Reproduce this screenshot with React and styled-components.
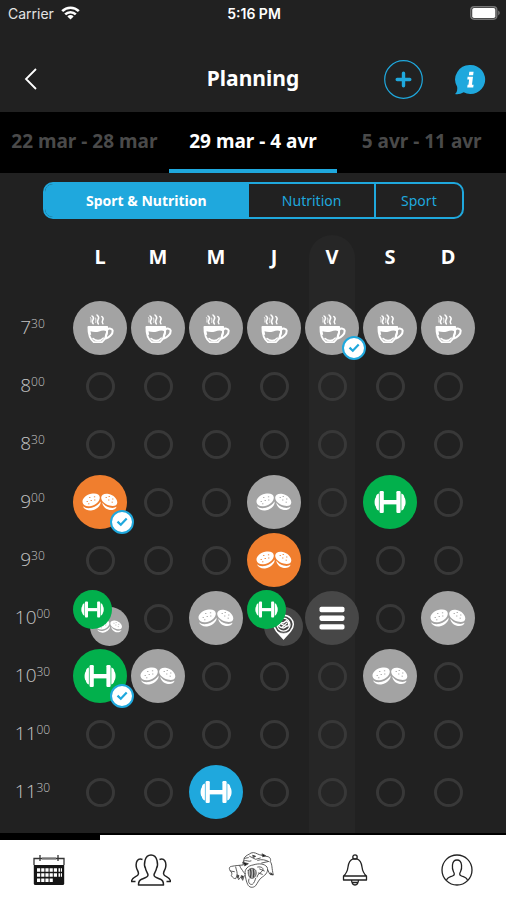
import React, { useState } from "react";
import styled, { createGlobalStyle, css } from "styled-components";

const color = {
  page: "#212121",
  column: "#262626",
  ring: "#383838",
  blue: "#1fa8dd",
  green: "#02b04c",
  orange: "#f07e2e",
  grey: "#a3a3a3",
  dark: "#474747",
};

const GlobalStyle = createGlobalStyle`
  * { box-sizing: border-box; }
  body { margin: 0; background: ${color.page}; color: #fff; font-family: "Noto Sans", "Open Sans", sans-serif; }
  button { margin: 0; padding: 0; border: 0; background: none; color: inherit; font: inherit; cursor: pointer; }
  svg { display: block; }
`;

const Page = styled.div`
  display: flex;
  flex-direction: column;
  min-height: 100vh;
  overflow: hidden;
`;

const StatusBar = styled.div`
  display: grid;
  grid-template-columns: 1fr auto 1fr;
  align-items: center;
  height: 26px;
  padding: 0 6px 0 8px;
  font-family: Inter, sans-serif;
  font-size: 14px;
`;

const Carrier = styled.div`
  display: flex;
  align-items: center;
  gap: 7px;
  color: #e4e4e4;
`;

const Clock = styled.div`
  font-weight: 600;
`;

const BatterySlot = styled.div`
  justify-self: end;
`;

const Header = styled.header`
  display: grid;
  grid-template-columns: 1fr auto 1fr;
  align-items: center;
  height: 86px;
  padding: 20px 20px 0 20px;
`;

const Title = styled.h1`
  margin: 0;
  padding-bottom: 3px;
  font-size: 21px;
  line-height: 32px;
  font-weight: 700;
`;

const BackButton = styled.button`
  justify-self: start;
`;

const Actions = styled.div`
  display: flex;
  align-items: center;
  justify-content: flex-end;
  gap: 32px;
`;

const WeekTabs = styled.nav`
  display: grid;
  grid-template-columns: repeat(3, 1fr);
  height: 61px;
  background: #000;
`;

const WeekTab = styled.button`
  border-bottom: 4px solid ${(p) => (p.$active ? color.blue : "transparent")};
  color: ${(p) => (p.$active ? "#fff" : "#4a4a4a")};
  font-size: 19px;
  font-weight: 700;
  white-space: nowrap;
`;

const Segments = styled.div`
  display: grid;
  grid-template-columns: 202fr 126fr 88fr;
  height: 37px;
  margin: 9px 42px 0 43px;
  border: 2px solid ${color.blue};
  border-radius: 10px;
  overflow: hidden;
`;

const Segment = styled.button`
  font-size: 14px;
  color: ${(p) => (p.$active ? "#fff" : color.blue)};
  background: ${(p) => (p.$active ? color.blue : "transparent")};
  font-weight: ${(p) => (p.$active ? 700 : 400)};
  & + & {
    border-left: 2px solid ${color.blue};
  }
`;

const Board = styled.main`
  padding: 16px 29px 0 0;
`;

const Schedule = styled.table`
  width: 100%;
  table-layout: fixed;
  border-collapse: collapse;
`;

const TimeColumn = styled.col`
  width: 71px;
`;

const DayHead = styled.th`
  height: 64px;
  padding: 0;
  vertical-align: top;
`;

const DayName = styled.div`
  width: 46px;
  height: 64px;
  margin: 0 auto;
  padding-top: 8px;
  border-radius: 23px 23px 0 0;
  background: ${(p) => (p.$today ? color.column : "transparent")};
  font-size: 20px;
  line-height: 28px;
  font-weight: 700;
`;

const TimeCell = styled.th`
  height: 58px;
  padding: 0 6px 0 0;
  vertical-align: top;
  color: #c4c4c4;
  font-family: "Open Sans", sans-serif;
  font-weight: 300;
  font-size: 19px;
  line-height: 56px;
`;

const Minutes = styled.sup`
  font-size: 12px;
  line-height: 1;
  vertical-align: 6px;
`;

const DayCell = styled.td`
  height: 58px;
  padding: 0;
  vertical-align: top;
  ${(p) =>
    p.$today &&
    css`
      background: linear-gradient(${color.column}, ${color.column}) center / 46px 100% no-repeat;
    `}
  tr:last-child & {
    padding-bottom: 12px;
  }
`;

const Slot = styled.div`
  position: relative;
  display: grid;
  place-items: center;
  width: 58px;
  height: 58px;
  margin: 0 auto;
`;

const EmptySlot = styled.button`
  width: 29px;
  height: 29px;
  border: 3px solid ${color.ring};
  border-radius: 50%;
`;

const Activity = styled.button`
  width: 54px;
  height: 54px;
  border-radius: 50%;
  background: ${(p) => color[p.$tone]};
  color: ${(p) => color[p.$tone]};
  svg {
    width: 100%;
    height: 100%;
  }
`;

const StackedActivity = styled(Activity)`
  position: absolute;
  width: 39px;
  height: 39px;
  ${(p) => (p.$front ? "left: 2px; top: 1px;" : "right: 0; bottom: 1px;")}
`;

const DoneBadge = styled.span`
  position: absolute;
  right: -5px;
  bottom: -3px;
  z-index: 1;
  display: grid;
  place-items: center;
  width: 24px;
  height: 24px;
  border: 2px solid ${color.blue};
  border-radius: 50%;
  background: #fff;
`;

const BottomNav = styled.nav`
  display: grid;
  grid-template-columns: repeat(5, 1fr);
  height: 67px;
  margin: auto -2px 0;
  border-top: 2px solid #000;
  background: #fff;
`;

const NavItem = styled.button`
  display: grid;
  place-items: center;
  border-top: 5px solid transparent;
  border-image: ${(p) => (p.$active ? "linear-gradient(90deg, #000 97%, #fff 97%) 5" : "none")};
  color: #222;
`;

const WifiIcon = () => (
  <svg width="19" height="14" viewBox="0 0 19 14" fill="none" stroke="#fff" strokeWidth="2.6">
    <path d="M1.2 5.2a11.8 11.8 0 0 1 16.6 0" />
    <path d="M4.2 8.4a7.5 7.5 0 0 1 10.6 0" />
    <path d="M9.5 13.6 6.4 10.4a4.4 4.4 0 0 1 6.2 0z" fill="#fff" stroke="none" />
  </svg>
);

const BatteryIcon = () => (
  <svg width="30" height="14" viewBox="0 0 30 14">
    <rect x="0.8" y="0.8" width="26" height="12.4" rx="3.4" fill="none" stroke="#777" strokeWidth="1.4" />
    <rect x="2.2" y="2" width="23.2" height="10" rx="1.8" fill="#fff" />
    <path d="M28.2 4.6q1.6 .9 1.6 2.4t-1.6 2.4z" fill="#777" />
  </svg>
);

const BackIcon = () => (
  <svg width="22" height="24" viewBox="0 0 22 24" fill="none" stroke="#fff" strokeWidth="1.8">
    <path d="M16 2 6 12l10 10" />
  </svg>
);

const AddIcon = () => (
  <svg width="39" height="39" viewBox="0 0 39 39" fill="none" stroke={color.blue}>
    <circle cx="19.5" cy="19.5" r="18.8" strokeWidth="1.2" />
    <path d="M19.5 13.2v12.600M13.200 19.5h12.600" strokeWidth="3.400" strokeLinecap="round" />
  </svg>
);

const InfoIcon = () => (
  <svg width="31" height="31" viewBox="0 0 32 32">
    <path d="M16 1a15 15 0 1 1-7 28.2C6 31 3 31.500 0 31c2-1.500 2.600-4 2.200-7.500A15 15 0 0 1 16 1z" fill={color.blue} />
    <path d="M14.800 8h4.400l-.5 3.600h-4.400zM13 13.200h5.600l-1.100 8.200h1.700l-.4 2.800h-6.200l.4-2.800h.9l.7-5.400h-1.900z" fill="#fff" />
  </svg>
);

const CupIcon = () => (
  <svg viewBox="0 0 54 54" fill="none" stroke="#fff" strokeLinecap="round" strokeLinejoin="round">
    <path d="M19 15c2 1.400 2 2.300 1 3.800s-.9 2.800.2 4M24 14c2 1.500 2.200 2.700 1.200 4.400s-1 3 .2 4.600M28.800 15.500c1.800 1.300 1.700 2.300.9 3.700s-.7 2.500.2 3.500" strokeWidth="1.500" />
    <path d="M17.500 16.500c1 1.300.5 3.500.3 4.500M22.600 17c.6 1.500.1 3 .1 4.500" strokeWidth=".8" />
    <path d="M15.400 26h18.800c.3 7-1.600 12.300-5.400 15.200h-7.900c-4-3-5.700-8.300-5.500-15.200z" strokeWidth="1.800" />
    <path d="M15.500 26.500h18.500l-.2 4c-3-1.600-5-.7-7.700 0-3.300.8-5.900.6-8.600-.3l.7 3.500-2 .2z" fill="#fff" stroke="none" />
    <path d="M20 37.500c2.400 2.700 7.700 3 10.200-.4" strokeWidth="1.600" />
    <path d="M34.400 28.500c1.500-1.400 5.100-1.300 5.300 1.200.2 3.500-3.600 6.800-7 7.800M34.300 28.500c-.1 2.500-.6 5-1.600 7" strokeWidth="2" />
  </svg>
);

const BreadIcon = () => (
  <svg viewBox="0 0 54 54">
    <g fill="#fff">
      <path d="M9.600 27.500c-.8-3.700 3.200-7.500 8.500-8.700 5-1.100 8.600.5 8.700 3.600.1 3.600-3.800 7.300-8.600 8.500-4.300 1.100-8.100-.4-8.600-3.400z" />
      <path d="M10 31.300c2.200 2 5.200 2.300 8.800 1.500 3.900-.9 7.200-3.300 8.700-6.200.8 3.700-3.600 7.700-8.300 8.700-4.200.9-8.200-.9-9.200-4z" />
      <path d="M28.200 22.500c.1-3 3.500-4.300 7.500-3.500 4.800 1 8.600 4.700 8.600 8.400 0 3.100-3.500 4.200-7.700 3.100-4.900-1.300-8.500-4.700-8.400-8z" />
      <path d="M29.300 27.500c1.800 2.400 4.300 4.300 7.200 5 2.900.7 5.400.4 7.100-.7-.9 2.600-4.100 3.900-7.800 3-3.600-.9-6.300-3.900-6.500-7.300z" />
    </g>
    <path d="M14 26.500h.5M16.500 22.500h.5M18 25.500h.5M21.300 21.800h.5M21.500 25h.5M15.500 28.800h.5M33 22.500h.5M36 21.500h.5M35.500 25h.5M39.500 24h.5M39 27.200h.5" stroke="currentColor" strokeWidth=".9" strokeLinecap="round" />
  </svg>
);

const DumbbellIcon = () => (
  <svg viewBox="0 0 54 54" fill="#fff">
    <rect x="20" y="25" width="14" height="4.400" />
    <rect x="16.600" y="16" width="4.200" height="22" rx="1.200" />
    <rect x="33.400" y="16" width="4.200" height="22" rx="1.200" />
    <path d="M15.900 18.500v17c-1.800-.3-2.900-2-3.100-3.900-1.600-1.600-1.600-7.600 0-9.200.2-1.900 1.300-3.600 3.100-3.900zM38.300 18.500v17c1.800-.3 2.900-2 3.100-3.900 1.600-1.600 1.600-7.600 0-9.200-.2-1.900-1.300-3.600-3.100-3.900z" />
  </svg>
);

const MenuIcon = () => (
  <svg viewBox="0 0 54 54" fill="#fff">
    <rect x="14.500" y="15.800" width="25" height="5.400" rx="1.800" />
    <rect x="14.500" y="24.500" width="25" height="5.400" rx="1.800" />
    <rect x="14.500" y="33.200" width="25" height="5.400" rx="1.800" />
  </svg>
);

const PinIcon = () => (
  <svg viewBox="0 0 54 54" fill="none" stroke="#fff">
    <path d="M27 44 17.500 33.500C12 27 13 20 17.500 15.500c5.500-5.500 14-5.500 19.500 0C41.500 20 42 27 36.500 33.500z" strokeWidth="2.200" />
    <path d="M27 44 19 34.500c4.500 2.700 11.500 2.700 16 0z" fill="#fff" />
    <circle cx="27" cy="24.500" r="9" strokeWidth="1.800" />
    <path d="M20 26c2-4 4-5 7-4l4-3c3 1 3.500 4 3 7-3-1-4 3-7 3s-5-1-7-3z" strokeWidth="2" />
    <path d="M23 23l8 4M25 28l7-6" strokeWidth="1.600" />
  </svg>
);

const CheckIcon = () => (
  <svg width="12" height="10" viewBox="0 0 12 10" fill="none" stroke={color.blue} strokeWidth="2.200">
    <path d="M1.500 4.600 4.800 7.800 10.700 1.500" />
  </svg>
);

const CalendarIcon = () => (
  <svg width="32" height="32" viewBox="0 0 32 32">
    <path d="M1 11V4.500h30V11M7 1v6M25 1v6" fill="none" stroke="#333" strokeWidth="1.300" />
    <path d="M9 4.500h14" stroke="#777" strokeWidth="2" />
    <path d="M.8 11h30.400v18.500q0 1.500-1.500 1.500H2.300Q.8 31 .8 29.500z" fill="#151515" />
    <path d="M4 16h20.500M4 21h20.500M4 26.300h16" stroke="#fff" strokeWidth="3.400" strokeDasharray="3.200 1" />
    <path d="M25.500 16h3.500M25.500 21h3.500" stroke="#fff" strokeWidth="3.400" strokeDasharray="1.500 .8" />
  </svg>
);

const PeopleIcon = () => (
  <svg width="40" height="32" viewBox="0 0 40 32" fill="none" stroke="currentColor" strokeWidth="1.500" strokeLinejoin="round">
    <path d="M7.500 31c0-3 .5-4.700 3-5.700 3.300-1.400 6.400-2 6.500-4.300.1-2-2.200-3.500-2.600-7C12.800 11.500 13 1 20 1s7.200 10.500 5.600 13c-.4 3.500-2.700 5-2.600 7 .1 2.300 3.200 2.900 6.500 4.300 2.500 1 3 2.700 3 5.700z" />
    <path d="M11.500 5.500C6.500 3.800 4.500 8 5.300 13c.5 3.200 2.500 4.500 2.100 7-.4 3-6.800 2.500-6.800 7.500h3.900M28.500 5.500c5-1.700 7 2.500 6.200 7.500-.5 3.200-2.500 4.500-2.100 7 .4 3 6.800 2.500 6.800 7.500h-3.900" />
  </svg>
);

const TigerIcon = () => (
  <svg width="60" height="55" viewBox="0 0 180 165" fill="none" stroke="#444" strokeWidth="2.600" strokeLinejoin="round" strokeLinecap="round">
    <path d="M60 66C48 67 36 68 26 70C17 71 18 78 22 84C28 87 27 94 25 98C29 104 33 107 38 107L42 98L47 110L54 101L59 112L64 98" />
    <path d="M38 72C40 82 44 88 42 97M50 68C52 76 58 80 62 88M22 84l12 2" />
    <path d="M60 64L64 44C70 36 78 35 84 30C94 26 102 33 109 35L128 40C140 40 145 47 142 56C148 64 146 76 151 96L140 93L134 80" />
    <path d="M62 54c8-5 14 4 22 0M80 40l18 9 14-4M64 46l12-2M104 52c12-4 22-2 34 4M116 60l18-4" />
    <path d="M66 92C64 78 76 68 90 66C108 60 124 62 132 72C138 84 128 96 118 102C108 108 104 120 98 128C90 136 78 134 74 124C70 116 68 106 66 92z" />
    <path d="M104 72C116 70 124 76 118 84C112 90 104 92 102 102M110 78l14 6M106 90l12 4" />
    <path d="M78 108C74 118 80 126 88 124C94 120 96 112 98 106" />
    <path d="M76 82C80 74 92 74 98 82C102 92 98 104 88 106C78 106 74 94 76 82z" fill="#bbb" />
    <path d="M82 80c4 8 2 16 0 24M91 80c2 8 2 16 0 22" strokeWidth="4" />
    <path d="M60 58l16 4-10 6zM118 33l10 5-8 3zM90 37l8 3-6 3zM56 98l5 2-3 6zM44 96l4 2-3 6zM144 90l6 5-6 0z" fill="#111" />
  </svg>
);

const BellIcon = () => (
  <svg width="26" height="32" viewBox="0 0 26 32" fill="none" stroke="currentColor" strokeWidth="1.300" strokeLinejoin="round">
    <circle cx="13" cy="3" r="2.200" />
    <path d="M11 4.800C7.500 6 6.500 9 6 13c-.5 4.200-1.700 6.600-4.500 9v4h23v-4c-2.800-2.400-4-4.800-4.500-9-.5-4-1.500-7-5-8.200zM2 22h22M9.500 26c.2 3.200 1 5 3.500 5s3.300-1.800 3.500-5M9.600 28.500h6.800" />
  </svg>
);

const ProfileIcon = () => (
  <svg width="32" height="32" viewBox="0 0 32 32" fill="none" stroke="currentColor" strokeWidth="1.300">
    <circle cx="16" cy="16" r="15" />
    <path d="M5.500 26.500c.5-3 3.500-3.500 6-4.500s2-2.500.9-4.500C11.300 15.500 9.800 6 16 6s4.700 9.500 3.600 11.500c-1.100 2-1.600 3.500.9 4.500s5.500 1.500 6 4.500" />
  </svg>
);

const kinds = {
  breakfast: { label: "Petit-déjeuner", tone: "grey", Icon: CupIcon },
  snack: { label: "Collation", tone: "grey", Icon: BreadIcon },
  snackNow: { label: "Collation", tone: "orange", Icon: BreadIcon },
  sport: { label: "Sport", tone: "green", Icon: DumbbellIcon },
  sportPlan: { label: "Sport", tone: "blue", Icon: DumbbellIcon },
  place: { label: "Lieu", tone: "dark", Icon: PinIcon },
  more: { label: "Menu", tone: "dark", Icon: MenuIcon },
};

const weeks = ["22 mar - 28 mar", "29 mar - 4 avr", "5 avr - 11 avr"];
const filters = ["Sport & Nutrition", "Nutrition", "Sport"];
const days = ["L", "M", "M", "J", "V", "S", "D"];
const today = 4;

const one = (kind, done = false) => ({ items: [kind], done });
const meal = one("breakfast");

const rows = [
  { time: ["7", "30"], slots: { 0: meal, 1: meal, 2: meal, 3: meal, 4: one("breakfast", true), 5: meal, 6: meal } },
  { time: ["8", "00"], slots: {} },
  { time: ["8", "30"], slots: {} },
  { time: ["9", "00"], slots: { 0: one("snackNow", true), 3: one("snack"), 5: one("sport") } },
  { time: ["9", "30"], slots: { 3: one("snackNow") } },
  {
    time: ["10", "00"],
    slots: { 0: { items: ["snack", "sport"] }, 2: one("snack"), 3: { items: ["place", "sport"] }, 4: one("more"), 6: one("snack") },
  },
  { time: ["10", "30"], slots: { 0: one("sport", true), 1: one("snack"), 5: one("snack") } },
  { time: ["11", "00"], slots: {} },
  { time: ["11", "30"], slots: { 2: one("sportPlan") } },
];

const navItems = [
  { label: "Planning", Icon: CalendarIcon },
  { label: "Communauté", Icon: PeopleIcon },
  { label: "Accueil", Icon: TigerIcon },
  { label: "Notifications", Icon: BellIcon },
  { label: "Profil", Icon: ProfileIcon },
];

function SlotContent({ slot }) {
  if (!slot) return <EmptySlot aria-label="Ajouter" />;
  const stacked = slot.items.length > 1;
  const Shape = stacked ? StackedActivity : Activity;
  return (
    <>
      {slot.items.map((name, i) => {
        const { label, tone, Icon } = kinds[name];
        return (
          <Shape key={name} $tone={tone} $front={i === 1} aria-label={label}>
            <Icon />
          </Shape>
        );
      })}
      {slot.done && (
        <DoneBadge>
          <CheckIcon />
        </DoneBadge>
      )}
    </>
  );
}

export default function App() {
  const [week, setWeek] = useState(1);
  const [filter, setFilter] = useState(0);
  const [section, setSection] = useState(0);

  return (
    <Page>
      <GlobalStyle />
      <StatusBar>
        <Carrier>
          Carrier
          <WifiIcon />
        </Carrier>
        <Clock>5:16 PM</Clock>
        <BatterySlot>
          <BatteryIcon />
        </BatterySlot>
      </StatusBar>
      <Header>
        <BackButton aria-label="Retour">
          <BackIcon />
        </BackButton>
        <Title>Planning</Title>
        <Actions>
          <button aria-label="Ajouter une activité">
            <AddIcon />
          </button>
          <button aria-label="Informations">
            <InfoIcon />
          </button>
        </Actions>
      </Header>
      <WeekTabs>
        {weeks.map((label, i) => (
          <WeekTab key={label} $active={i === week} onClick={() => setWeek(i)}>
            {label}
          </WeekTab>
        ))}
      </WeekTabs>
      <Segments>
        {filters.map((label, i) => (
          <Segment key={label} $active={i === filter} aria-pressed={i === filter} onClick={() => setFilter(i)}>
            {label}
          </Segment>
        ))}
      </Segments>
      <Board>
        <Schedule>
          <colgroup>
            <TimeColumn />
            <col span={7} />
          </colgroup>
          <thead>
            <tr>
              <td />
              {days.map((day, i) => (
                <DayHead key={i} scope="col">
                  <DayName $today={i === today}>{day}</DayName>
                </DayHead>
              ))}
            </tr>
          </thead>
          <tbody>
            {rows.map(({ time: [hour, minutes], slots }) => (
              <tr key={hour + minutes}>
                <TimeCell scope="row">
                  {hour}
                  <Minutes>{minutes}</Minutes>
                </TimeCell>
                {days.map((_, i) => (
                  <DayCell key={i} $today={i === today}>
                    <Slot>
                      <SlotContent slot={slots[i]} />
                    </Slot>
                  </DayCell>
                ))}
              </tr>
            ))}
          </tbody>
        </Schedule>
      </Board>
      <BottomNav>
        {navItems.map(({ label, Icon }, i) => (
          <NavItem key={label} $active={i === section} aria-label={label} onClick={() => setSection(i)}>
            <Icon />
          </NavItem>
        ))}
      </BottomNav>
    </Page>
  );
}
